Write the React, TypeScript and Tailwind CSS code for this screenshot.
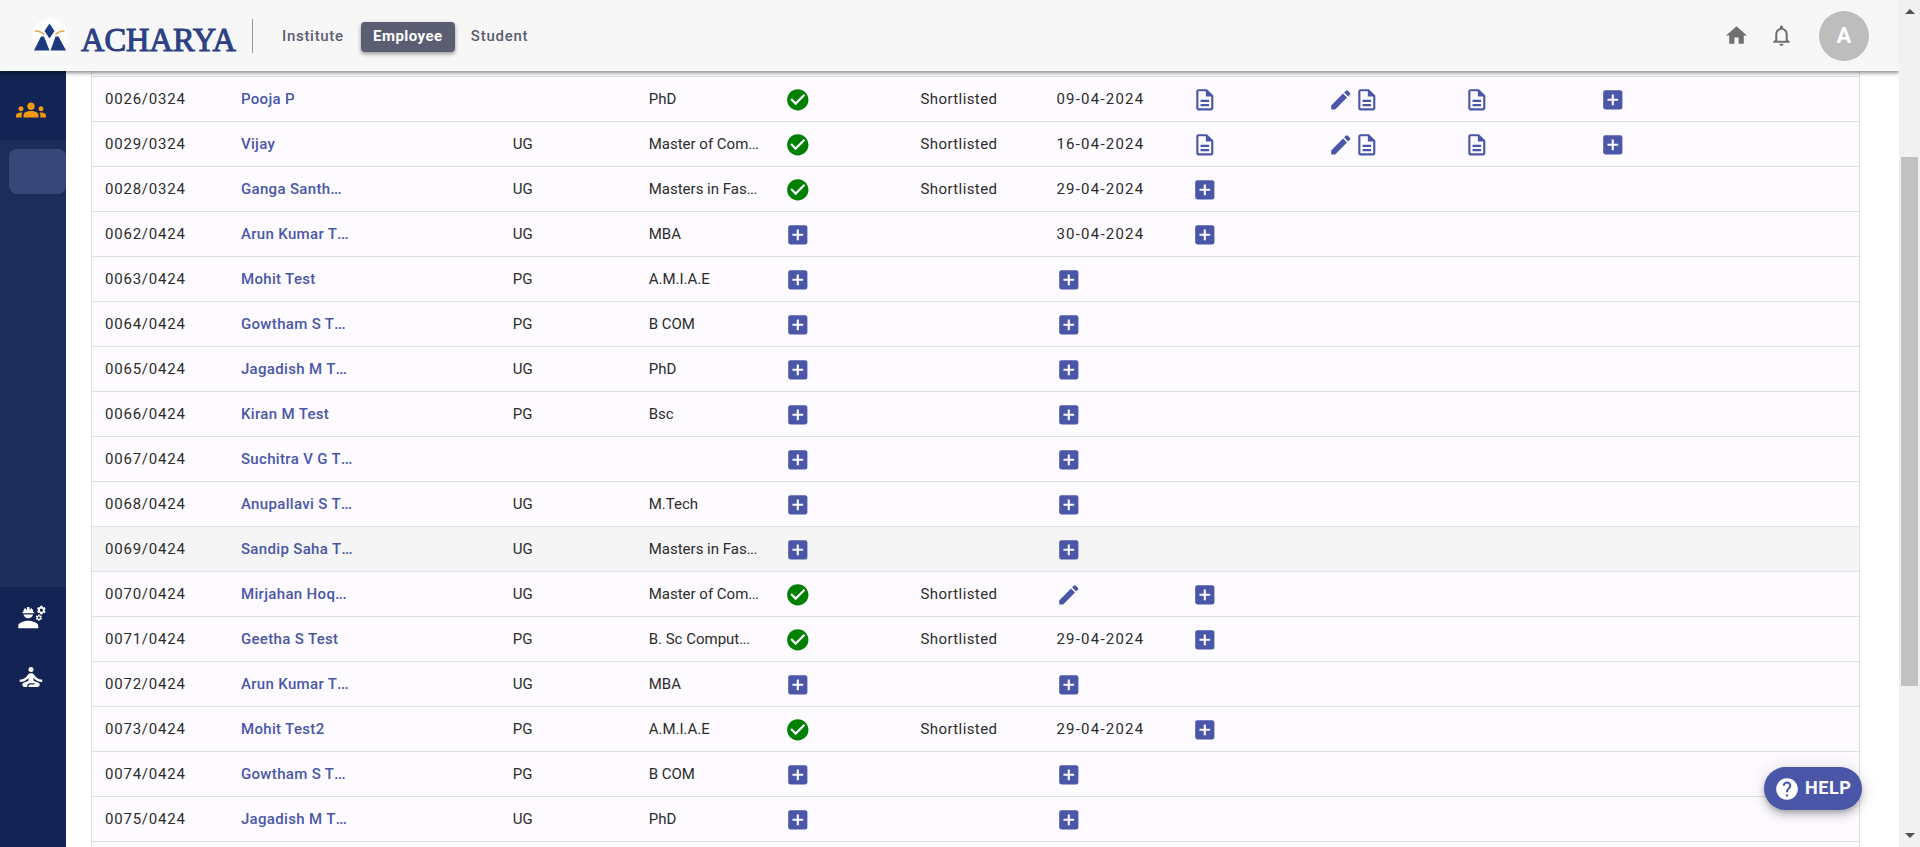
import { MdAddBox, MdCheckCircle, MdEdit, MdGroups, MdEngineering, MdSelfImprovement, MdHome, MdHelp } from "react-icons/md";

type Cell = string;
type Row = [id: string, name: string, level: string, degree: string, check: boolean, status: string, date: Cell, c8: Cell, c9: Cell, c10: Cell, c11: Cell];

const rows: Row[] = [
  ["0026/0324", "Pooja P", "", "PhD", true, "Shortlisted", "09-04-2024", "doc", "edit-doc", "doc", "add"],
  ["0029/0324", "Vijay", "UG", "Master of Com...", true, "Shortlisted", "16-04-2024", "doc", "edit-doc", "doc", "add"],
  ["0028/0324", "Ganga Santh...", "UG", "Masters in Fas...", true, "Shortlisted", "29-04-2024", "add", "", "", ""],
  ["0062/0424", "Arun Kumar T...", "UG", "MBA", false, "", "30-04-2024", "add", "", "", ""],
  ["0063/0424", "Mohit Test", "PG", "A.M.I.A.E", false, "", "add", "", "", "", ""],
  ["0064/0424", "Gowtham S T...", "PG", "B COM", false, "", "add", "", "", "", ""],
  ["0065/0424", "Jagadish M T...", "UG", "PhD", false, "", "add", "", "", "", ""],
  ["0066/0424", "Kiran M Test", "PG", "Bsc", false, "", "add", "", "", "", ""],
  ["0067/0424", "Suchitra V G T...", "", "", false, "", "add", "", "", "", ""],
  ["0068/0424", "Anupallavi S T...", "UG", "M.Tech", false, "", "add", "", "", "", ""],
  ["0069/0424", "Sandip Saha T...", "UG", "Masters in Fas...", false, "", "add", "", "", "", ""],
  ["0070/0424", "Mirjahan Hoq...", "UG", "Master of Com...", true, "Shortlisted", "edit", "add", "", "", ""],
  ["0071/0424", "Geetha S Test", "PG", "B. Sc Comput...", true, "Shortlisted", "29-04-2024", "add", "", "", ""],
  ["0072/0424", "Arun Kumar T...", "UG", "MBA", false, "", "add", "", "", "", ""],
  ["0073/0424", "Mohit Test2", "PG", "A.M.I.A.E", true, "Shortlisted", "29-04-2024", "add", "", "", ""],
  ["0074/0424", "Gowtham S T...", "PG", "B COM", false, "", "add", "", "", "", ""],
  ["0075/0424", "Jagadish M T...", "UG", "PhD", false, "", "add", "", "", "", ""],
];

const iconClass = "size-[25.6px] shrink-0 text-[#4a57a9]";

function DocIcon() {
  return (
    <svg viewBox="0 0 24 24" className={iconClass} fill="currentColor">
      <path d="M8 16h8v2H8zm0-4h8v2H8zm6-10H6c-1.1 0-2 .9-2 2v16c0 1.1.89 2 1.99 2H18c1.1 0 2-.9 2-2V8zm4 18H6V4h7v5h5z" />
    </svg>
  );
}

function Truncated({ text }: { text: string }) {
  if (!text.endsWith("...")) return <span>{text}</span>;
  return (
    <span>
      {text.slice(0, -3)}
      <span className="tracking-[-0.6px]">...</span>
    </span>
  );
}

function Content({ value }: { value: Cell }) {
  if (value === "doc") return <DocIcon />;
  if (value === "add") return <MdAddBox className={iconClass} />;
  if (value === "edit") return <MdEdit className={iconClass} />;
  if (value === "edit-doc")
    return (
      <>
        <MdEdit className={iconClass} />
        <DocIcon />
      </>
    );
  return <span className="tracking-[1.22px]">{value}</span>;
}

function TableRow({ row, hovered }: { row: Row; hovered: boolean }) {
  const [id, name, level, degree, check, status, ...rest] = row;
  return (
    <div className={`grid h-[45px] grid-cols-13 items-center border-b border-[#e0e0e0] *:flex *:items-center *:pl-[13px] *:whitespace-nowrap ${hovered ? "bg-[#f5f5f5]" : ""}`}>
      <div className="tracking-[0.78px]">{id}</div>
      <div className="font-medium tracking-[0.34px] text-[#4a57a9]"><Truncated text={name} /></div>
      <div />
      <div>{level}</div>
      <div><Truncated text={degree} /></div>
      <div className="pt-px">{check ? <MdCheckCircle className="size-[25.6px] text-[#008000]" /> : <MdAddBox className={iconClass} />}</div>
      <div className="tracking-[0.4px]">{status}</div>
      {rest.map((value, i) => (
        <div key={i} className={value.includes("-0") ? "" : "pt-px"}>
          <Content value={value} />
        </div>
      ))}
    </div>
  );
}

function Logo() {
  return (
    <div className="flex items-center">
      <svg viewBox="0 0 40 36" className="h-9 w-10">
        <circle cx="20" cy="18" r="18" fill="#fdfdfd" />
        <path d="M19.500 5.500l5 7.500-5 7.500-5-7.500z" fill="#1c3a7e" />
        <path d="M11 18.500h3L19.500 32.500H4z M25.500 18.500h3L36 32.500H20.500z" fill="#1c3a7e" />
        <path d="M5 13q6 0 9 3.500M34.500 13q-6 0-9 3.500" stroke="#eda544" strokeWidth="1.700" fill="none" />
      </svg>
      <svg viewBox="0 0 158 46" className="ml-2.5 h-[46px] w-[158px]">
        <text x="1" y="37.500" textLength="155" lengthAdjust="spacingAndGlyphs" fontFamily="Liberation Serif, serif" fontSize="33" fill="#2b4184" stroke="#2b4184" strokeWidth="1.100">ACHARYA</text>
      </svg>
    </div>
  );
}

function Header() {
  return (
    <header className="relative z-10 flex h-[71px] w-[1899px] shrink-0 items-center bg-[#f7f7f7] pl-[30px] text-[#5b5d72] shadow-[0_2px_4px_rgba(0,0,0,0.45)]">
      <Logo />
      <div className="ml-[14px] h-[34px] w-px bg-[#999]" />
      <nav className="ml-[29px] flex items-center pt-0.5 text-[15px] font-medium">
        <span className="tracking-[0.7px]">Institute</span>
        <span className="ml-[17px] flex h-[30px] w-[94px] items-center justify-center rounded-[4px] bg-[#5b5d72] font-bold tracking-[0.45px] text-white shadow-[0_2px_4px_rgba(0,0,0,0.4)]">Employee</span>
        <span className="ml-4 tracking-[0.75px]">Student</span>
      </nav>
      <div className="ml-auto flex items-center pr-[30px]">
        <MdHome className="size-[25px] text-[#707070]" />
        <svg viewBox="0 0 24 24" className="ml-[20px] size-[25px] text-[#707070]" fill="currentColor">
          <path d="M12 22c1.100 0 2-.9 2-2h-4c0 1.100.9 2 2 2zm6-6v-5c0-3.070-1.630-5.640-4.500-6.320V4c0-.83-.67-1.500-1.500-1.500s-1.500.67-1.500 1.500v.68C7.640 5.360 6 7.920 6 11v5l-2 2v1h16v-1l-2-2zm-2 1H8v-6c0-2.480 1.510-4.500 4-4.500s4 2.020 4 4.500v6z" />
        </svg>
        <div className="ml-[25px] flex size-[50px] items-center justify-center rounded-full bg-[#bdbdbd] text-[22px] font-bold text-white">A</div>
      </div>
    </header>
  );
}

function Sidebar() {
  return (
    <aside className="flex w-[66px] shrink-0 flex-col bg-[#132353]">
      <div className="flex h-[69px] items-start pt-6 pl-4">
        <MdGroups className="size-[30px] text-[#f29a0e]" />
      </div>
      <div className="h-[447px] bg-[#1c2d5b] pt-[9px] pl-[9px]">
        <div className="h-[45px] rounded-lg bg-[#394679]" />
      </div>
      <div className="flex flex-col gap-[30px] pt-[15px] pl-[17px] text-white">
        <MdEngineering className="size-[30px]" />
        <MdSelfImprovement className="-ml-px size-[30px]" />
      </div>
    </aside>
  );
}

function Scrollbar() {
  return (
    <div className="flex w-[21px] shrink-0 flex-col items-center bg-[#f1f1f1]">
      <svg viewBox="0 0 10 5" className="mt-[9px] h-[5px] w-[10px]"><path d="M5 0l5 5H0z" fill="#505050" /></svg>
      <div className="mt-[143px] h-[529px] w-[17px] bg-[#c1c1c1]" />
      <svg viewBox="0 0 10 5" className="mt-auto mb-[9px] h-[5px] w-[10px]"><path d="M5 5l5-5H0z" fill="#505050" /></svg>
    </div>
  );
}

export default function App() {
  return (
    <div className="flex h-[847px] w-[1920px] overflow-hidden bg-white font-['Roboto',sans-serif]">
      <div className="flex w-[1899px] flex-col overflow-hidden">
        <Header />
        <div className="flex min-h-0 flex-1">
          <Sidebar />
          <main className="ml-[25px] w-[1769px] border-x border-[#e0e0e0] bg-[#fdfbff] text-[15px] text-[#2c2c2c]">
            <div className="h-1.5 border-b border-[#e0e0e0]" />
            {rows.map((row, i) => (
              <TableRow key={row[0]} row={row} hovered={i === 10} />
            ))}
          </main>
        </div>
      </div>
      <Scrollbar />
      <button className="absolute top-[767px] left-[1764px] z-20 flex h-[43px] w-[98px] items-center rounded-full bg-[#4a57a9] pl-[10px] text-lg font-bold text-white shadow-[0_3px_5px_-1px_rgba(0,0,0,0.2),0_6px_10px_rgba(0,0,0,0.14),0_1px_18px_rgba(0,0,0,0.12)]">
        <MdHelp className="size-[26px]" />
        <span className="-mt-0.5 ml-[5px] tracking-[0.6px]">HELP</span>
      </button>
    </div>
  );
}
